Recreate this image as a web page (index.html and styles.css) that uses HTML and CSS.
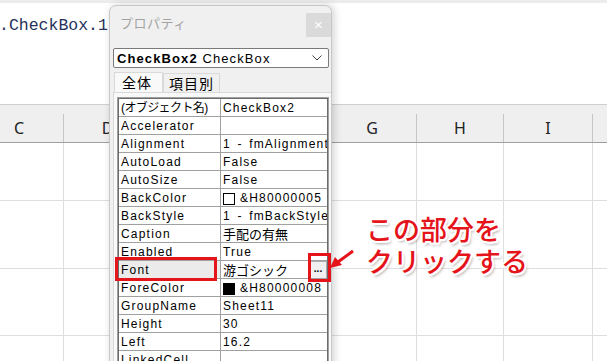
FILE: index.html
```html
<!DOCTYPE html>
<html lang="ja">
<head>
<meta charset="utf-8">
<link rel="stylesheet" href="styles.css">
</head>
<body>
<div class="sheet">
  <div class="code">.CheckBox.1</div>
  <div class="colhead">
    <div class="hc"><span>C</span></div>
    <div class="hc"><span>D</span></div>
    <div class="hc"><span>E</span></div>
    <div class="hc"><span>F</span></div>
    <div class="hc"><span>G</span></div>
    <div class="hc"><span>H</span></div>
    <div class="hc"><span>I</span></div>
    <div class="hc"><span></span></div>
  </div>
  <div class="srow r1"><div></div><div></div><div></div><div></div><div></div><div></div><div></div><div></div></div>
  <div class="srow r2"><div></div><div></div><div></div><div></div><div></div><div></div><div></div><div></div></div>
  <div class="srow r3"><div></div><div></div><div></div><div></div><div></div><div></div><div></div><div></div></div>
  <div class="srow r4"><div></div><div></div><div></div><div></div><div></div><div></div><div></div><div></div></div>
</div>

<div class="props">
  <div class="titlebar">
    <span class="title">プロパティ</span>
    <span class="close">×</span>
  </div>
  <div class="combo">
    <span class="combo-text"><b>CheckBox2</b> CheckBox</span>
    <svg class="chev" width="10" height="6" viewBox="0 0 10 6"><polyline points="0.5,0.5 5,5 9.5,0.5" fill="none" stroke="#444" stroke-width="1"/></svg>
  </div>
  <div class="tabs">
    <span class="tab active">全体</span>
    <span class="tab">項目別</span>
  </div>
  <div class="page">
    <div class="grid-outer">
      <div class="grid">
        <div class="pr"><span class="pn jp">(オブジェクト名)</span><span class="pv">CheckBox2</span></div>
        <div class="pr"><span class="pn">Accelerator</span><span class="pv"></span></div>
        <div class="pr"><span class="pn">Alignment</span><span class="pv">1 - fmAlignment</span></div>
        <div class="pr"><span class="pn">AutoLoad</span><span class="pv">False</span></div>
        <div class="pr"><span class="pn">AutoSize</span><span class="pv">False</span></div>
        <div class="pr"><span class="pn">BackColor</span><span class="pv"><i class="sw white"></i>&amp;H80000005</span></div>
        <div class="pr"><span class="pn">BackStyle</span><span class="pv">1 - fmBackStyle</span></div>
        <div class="pr"><span class="pn">Caption</span><span class="pv"><span class="jpv">手配の有無</span></span></div>
        <div class="pr"><span class="pn">Enabled</span><span class="pv">True</span></div>
        <div class="pr sel"><span class="pn">Font</span><span class="pv"><span class="jpv">游ゴシック</span><span class="dots">...</span></span></div>
        <div class="pr"><span class="pn">ForeColor</span><span class="pv"><i class="sw black"></i>&amp;H80000008</span></div>
        <div class="pr"><span class="pn">GroupName</span><span class="pv">Sheet11</span></div>
        <div class="pr"><span class="pn">Height</span><span class="pv">30</span></div>
        <div class="pr"><span class="pn">Left</span><span class="pv">16.2</span></div>
        <div class="pr"><span class="pn">LinkedCell</span><span class="pv"></span></div>
      </div>
    </div>
  </div>
</div>

<div class="mark mark-name"></div>
<div class="mark mark-btn"></div>
<svg class="arrow" width="30" height="24" viewBox="0 0 30 24">
  <line x1="25" y1="4" x2="10" y2="15" stroke="#e5141b" stroke-width="3"/>
  <polygon points="2,21 7,10 14,18" fill="#e5141b"/>
</svg>
<div class="callout">この部分を<br>クリックする</div>
</body>
</html>
```

FILE: styles.css
```css
* { box-sizing: border-box; }
html, body { margin: 0; padding: 0; }
body {
  width: 607px;
  height: 361px;
  overflow: hidden;
  background: #fff;
  position: relative;
  font-family: "Liberation Sans", "Noto Sans CJK JP", sans-serif;
}

/* spreadsheet background */
.sheet { width: 632px; margin-left: -25px; overflow: hidden; }
.code {
  height: 104px;
  border-top: 3px solid #ececec;
  padding: 13px 0 0 24px;
  font: 16.5px/20px "Liberation Mono", monospace;
  color: #25325a;
}
.colhead {
  display: grid;
  grid-template-columns: 89px 88px 88px 88px 89px 87px 89px 88px;
  height: 39px;
  background: #efefef;
  border-top: 1px solid #cfcfcf;
  border-bottom: 1px solid #9f9f9f;
}
.hc {
  margin-top: 9px;
  border-right: 1px solid #c6c6c6;
  display: flex;
  align-items: center;
  justify-content: center;
  font: 16px "Noto Sans", sans-serif;
  color: #222;
}
.srow {
  display: grid;
  grid-template-columns: 89px 88px 88px 88px 89px 87px 89px 88px;
  border-bottom: 1px solid #dedede;
}
.srow > div { border-right: 1px solid #dedede; }
.r1 { height: 58px; }
.r2 { height: 68px; }
.r3 { height: 67px; }
.r4 { height: 67px; }

/* properties window */
.props {
  position: absolute;
  left: 109px;
  top: 5px;
  width: 223px;
  height: 380px;
  background: #f0f0f0;
  border: 1px solid #c8c8c8;
  border-radius: 7px 7px 0 0;
  box-shadow: 2px 0 8px rgba(0,0,0,0.18);
}
.titlebar {
  height: 42px;
  display: flex;
  justify-content: space-between;
  align-items: flex-start;
  padding-left: 10px;
}
.title {
  margin-top: 7px;
  font: 13px "Noto Sans CJK JP", sans-serif;
  color: #a3a3a3;
  letter-spacing: 0.5px;
}
.close {
  margin-top: 7px;
  width: 25px;
  height: 24px;
  background: #dadada;
  color: #fff;
  font: 15px/24px "Liberation Sans", sans-serif;
  text-align: center;
}
.combo {
  margin: 0 2px 0 3px;
  height: 20px;
  background: #fff;
  border: 1px solid #7a7a7a;
  border-radius: 2px;
  display: flex;
  align-items: center;
  justify-content: space-between;
  padding: 0 6px 0 3px;
}
.combo-text {
  font: 13px "Liberation Sans", sans-serif;
  letter-spacing: 1.1px;
  color: #000;
  white-space: nowrap;
}
.tabs {
  display: flex;
  align-items: flex-end;
  margin: 4px 0 0 4px;
  height: 20px;
}
.tab {
  height: 19px;
  padding: 0 5px;
  font: 14px/18px "Noto Sans CJK JP", sans-serif;
  letter-spacing: 1px;
  color: #000;
  border: 1px solid #d9d9d9;
  border-bottom: none;
  background: #f0f0f0;
}
.tab.active {
  height: 20px;
  width: 49px;
  padding-left: 7px;
  background: #f9f9f9;
}
.page {
  margin: 0 0 0 3px;
  border: 1px solid #d9d9d9;
  border-right: none;
  background: #f9f9f9;
  padding: 4px 2px 0 3px;
  height: 300px;
}
.grid-outer { border: 1px solid #a0a0a0; }
.grid {
  border: 1px solid #6b6b6b;
  background: #fff;
}
.pr {
  display: grid;
  grid-template-columns: 102px 1fr;
  height: 18px;
  border-bottom: 1px solid #a0a0a0;
  font-size: 12px;
  line-height: 15px;
  letter-spacing: 1.2px;
  word-spacing: 2px;
  color: #000;
}
.pn {
  border-right: 1px solid #a0a0a0;
  padding: 2px 0 0 2px;
  white-space: nowrap;
  overflow: hidden;
}
.pn.jp { letter-spacing: -0.6px; }
.pv {
  padding: 2px 0 0 2px;
  white-space: nowrap;
  overflow: hidden;
  display: flex;
  align-items: center;
}
.jpv { font-size: 13px; letter-spacing: 0; }
.sel .pn { background: #ebebeb; }
.sw {
  display: inline-block;
  width: 12px;
  height: 12px;
  border: 1px solid #000;
  margin-right: 5px;
  flex: none;
}
.sw.white { background: #fff; }
.sw.black { background: #000; }
.dots {
  margin: -2px 0 0 auto;
  width: 18px;
  height: 18px;
  background: #f0f0f0;
  border: 1px solid #adadad;
  font: bold 10px/14px "Liberation Sans", sans-serif;
  letter-spacing: 0;
  text-align: center;
  flex: none;
}

/* annotations */
.mark {
  position: absolute;
  border: 3px solid #e5141b;
}
.mark-name { left: 115px; top: 257px; width: 102px; height: 24px; }
.mark-btn { left: 308px; top: 253px; width: 23px; height: 29px; }
.arrow { position: absolute; left: 328px; top: 247px; }
.callout {
  position: absolute;
  left: 366px;
  top: 213px;
  font: 500 27px/32px "Noto Sans CJK JP", sans-serif;
  color: #e5141b;
  white-space: nowrap;
  text-shadow:
    -2px 0 #fff, 2px 0 #fff, 0 -2px #fff, 0 2px #fff,
    -1.5px -1.5px #fff, 1.5px 1.5px #fff, -1.5px 1.5px #fff, 1.5px -1.5px #fff,
    2px 3px 3px rgba(0,0,0,0.35);
}
```
